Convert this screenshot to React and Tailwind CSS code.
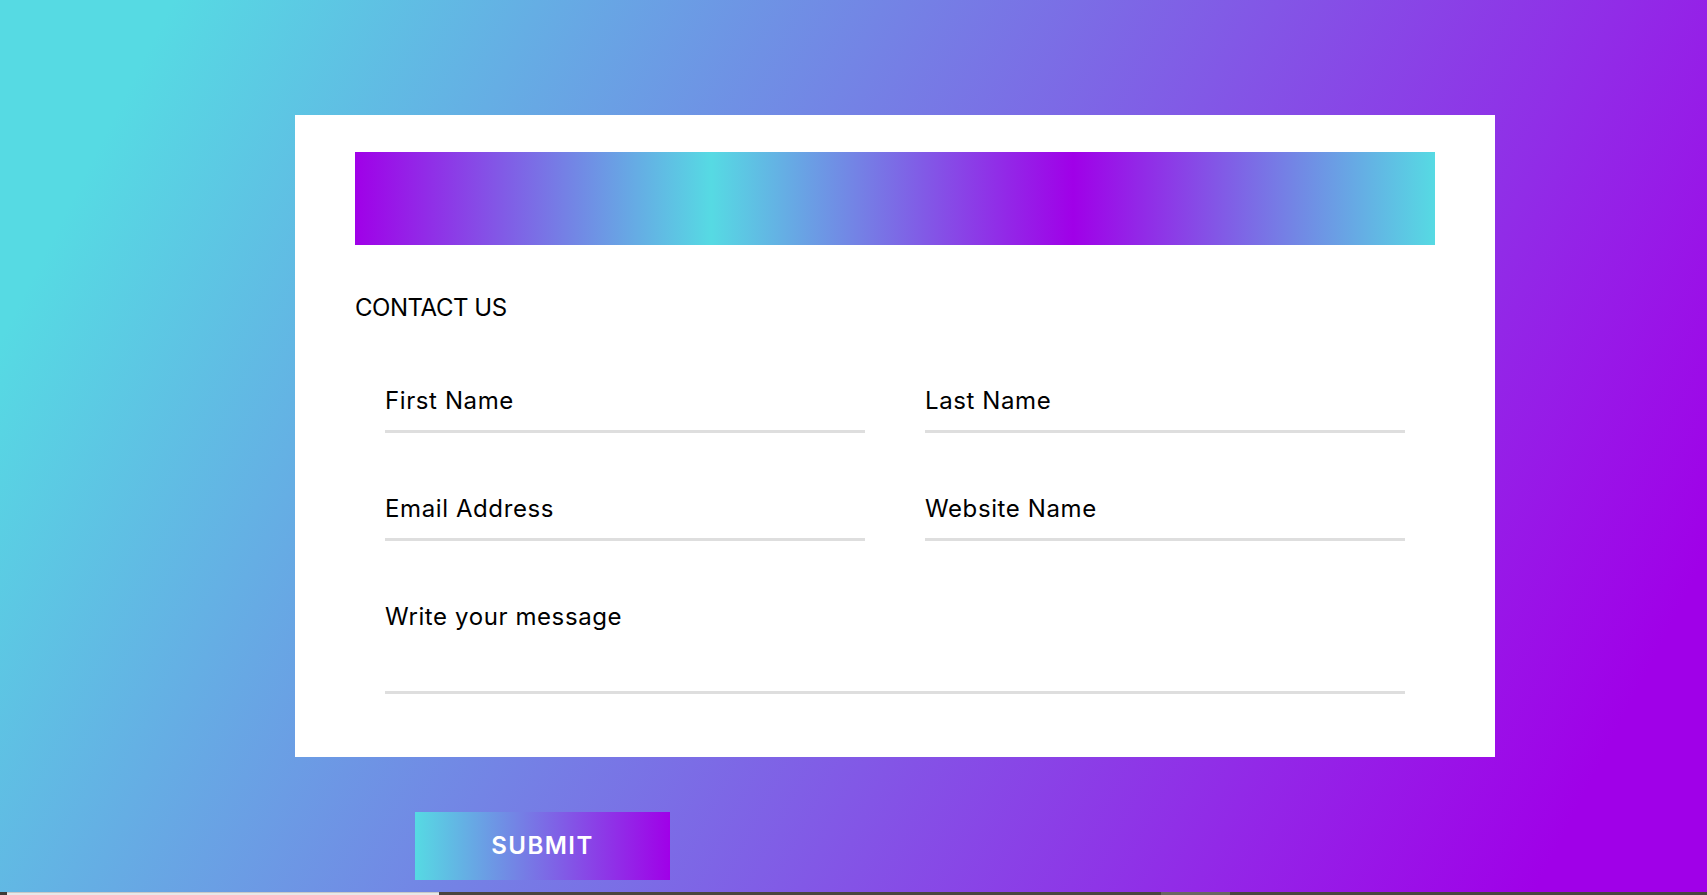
export default function App() {
  const field =
    "border-b-[3px] border-[#dedede] pt-[1px] text-[24px] leading-[30px] tracking-[0.6px] text-black";
  return (
    <div className="flex h-[895px] w-full flex-col overflow-hidden bg-[linear-gradient(117deg,#56dae3_8%,#a000e8_92%)] font-['Inter','Open_Sans',sans-serif]">
      <div className="flex flex-col pl-[295px] pt-[115px]">
        <div className="flex w-[1200px] flex-col bg-white px-[60px] pt-[37px] pb-[63px]">
          <div className="h-[93px] w-full bg-[linear-gradient(to_right,#a000e8_0%,#56dae3_33%,#a000e8_66.5%,#56dae3_100%)]" />
          <h2 className="mt-[48px] text-[24px] leading-[30px] font-normal tracking-[-0.45px] text-black">
            CONTACT US
          </h2>
          <form className="mt-[62px] flex flex-col gap-[60px] px-[30px]">
            <div className="grid grid-cols-2 gap-x-[60px]">
              <div className={field + " pb-[14px]"}>First Name</div>
              <div className={field + " pb-[14px]"}>Last Name</div>
            </div>
            <div className="grid grid-cols-2 gap-x-[60px]">
              <div className={field + " pb-[14px]"}>Email Address</div>
              <div className={field + " pb-[14px]"}>Website Name</div>
            </div>
            <div className={field + " pb-[59px]"}>Write your message</div>
          </form>
        </div>
        <div className="mt-[55px] pl-[120px]">
          <button
            type="button"
            className="flex h-[68px] w-[255px] items-center justify-center bg-[linear-gradient(to_right,#56dae3,#a000e8)] text-[24px] font-semibold tracking-[1.5px] text-white"
          >
            SUBMIT
          </button>
        </div>
      </div>
      <div className="mt-auto flex h-[3px] w-full">
        <div className="h-full w-[7px] bg-[#3f3a36]" />
        <div className="h-full w-[432px] border-t border-[#c8c8c8] bg-[#e8e8e8]" />
        <div className="h-full w-[722px] bg-[#4a443f]" />
        <div className="h-full w-[69px] bg-[#6b6561]" />
        <div className="h-full flex-1 bg-[#4a443f]" />
      </div>
    </div>
  );
}
